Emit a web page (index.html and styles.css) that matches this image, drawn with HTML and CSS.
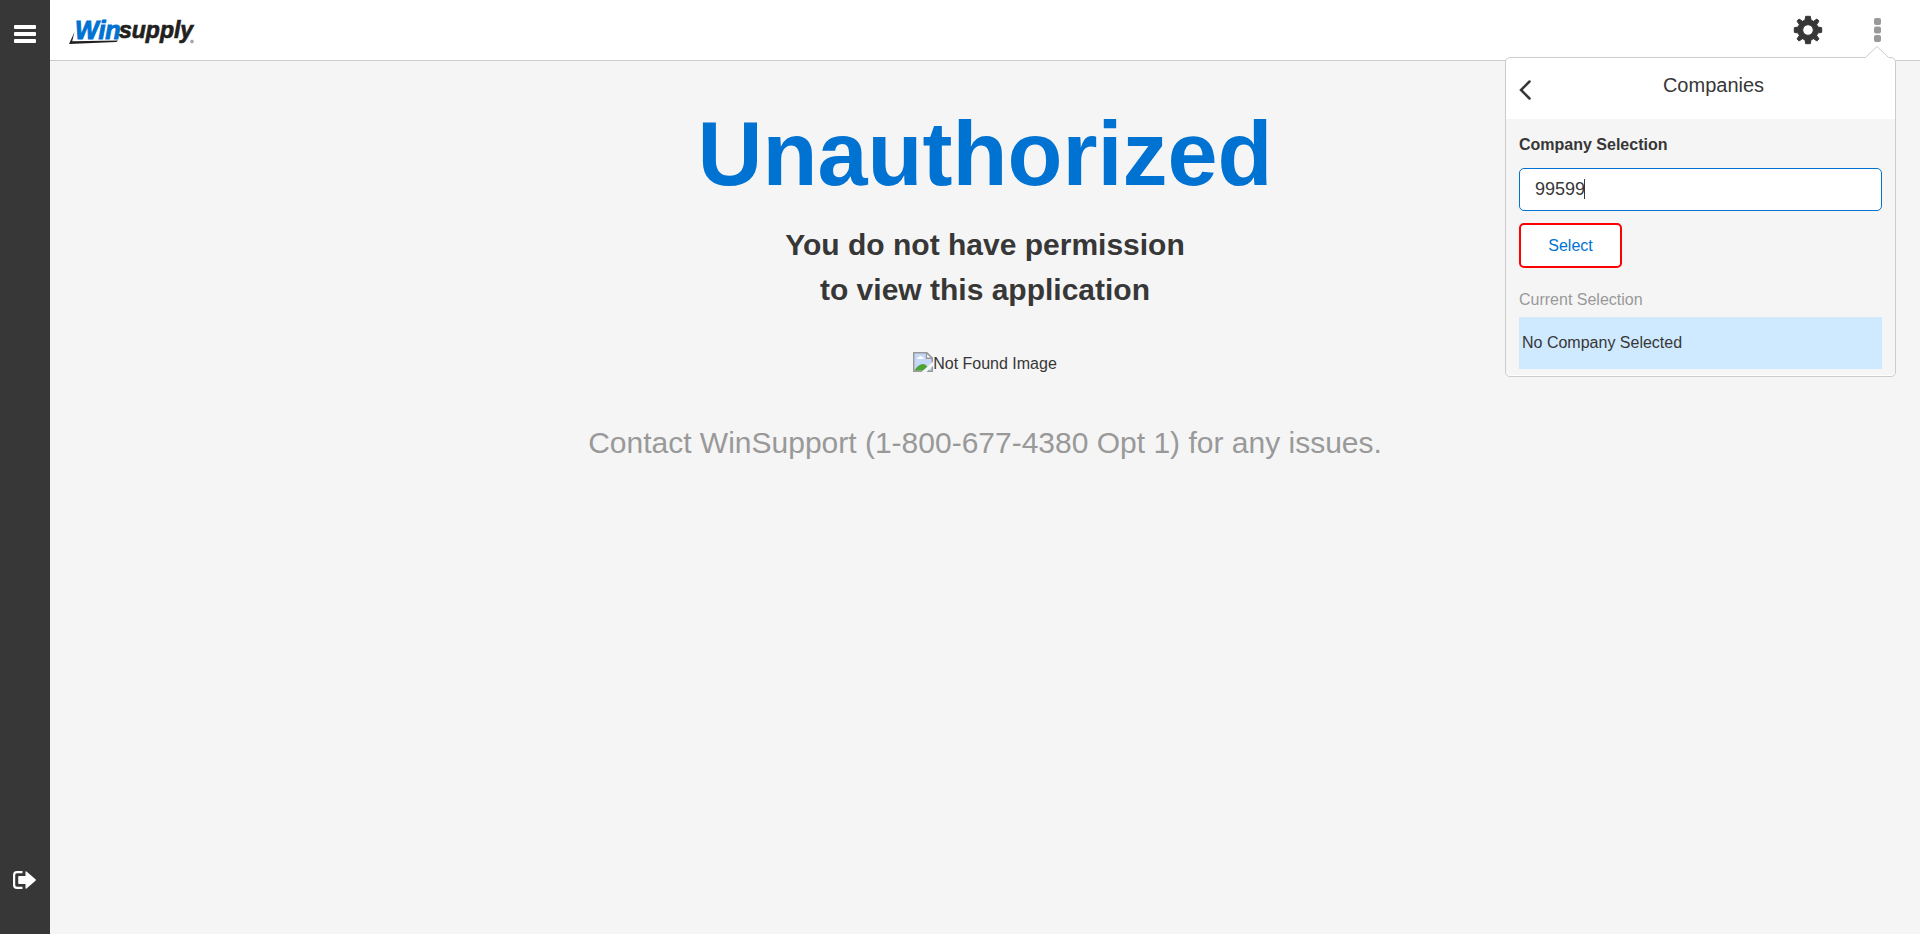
FILE: index.html
```html
<!DOCTYPE html>
<html lang="en">
<head>
<meta charset="utf-8">
<title>Unauthorized - Winsupply</title>
<link rel="stylesheet" href="styles.css">
</head>
<body>
<div class="app">
  <nav class="rail" aria-label="Main">
    <button class="icon-button" type="button" aria-label="Menu">
      <svg width="22" height="18" viewBox="0 0 22 18" fill="#fff"><rect width="22" height="4" rx="1"/><rect y="7" width="22" height="4" rx="1"/><rect y="14" width="22" height="4" rx="1"/></svg>
    </button>
    <button class="icon-button" type="button" aria-label="Sign out">
      <svg width="24" height="18" viewBox="0 0 24 18"><path d="M9.500 1.100H4Q1.100 1.100 1.100 4v10q0 2.900 2.900 2.900h5.500" fill="none" stroke="#fff" stroke-width="2.200"/><path d="M6 5h6.500V1q0-1.200 1-.5l9 7.800q.7.700 0 1.400l-9 7.800q-1 .7-1-.5v-4H6q-.8 0-.8-.8V5.800Q5.200 5 6 5z" fill="#fff"/></svg>
    </button>
  </nav>
  <div class="page">
    <header class="topbar">
      <a class="logo" href="#" aria-label="Winsupply">
        <svg width="126" height="28" viewBox="0 0 126 28">
          <path d="M5.500 14 3.200 23.300 49 22.500 47.500 24 0 26z" fill="#231f20"/>
          <text class="logo-win" x="6" y="21">Win</text>
          <text class="logo-supply" x="50" y="20">supply</text>
          <circle cx="123" cy="23.500" r="1.400" fill="#bbb" stroke="#777" stroke-width=".6"/>
        </svg>
      </a>
      <div class="tools">
        <button class="icon-button" type="button" aria-label="Settings">
          <svg width="30" height="30" viewBox="-15 -15 30 30" fill="#373737">
            <path fill-rule="evenodd" d="M-2.300-13.700h4.600l.8 4 2.500 1L8.900-11 11-8.900 8.700-5.600l1 2.500 4 .8v4.600l-4 .8-1 2.500L11 8.900 8.900 11 5.600 8.700l-2.500 1-.8 4h-4.600l-.8-4-2.500-1L-8.900 11-11 8.900-8.700 5.600l-1-2.500-4-.8v-4.600l4-.8 1-2.500L-11-8.900-8.900-11-5.600-8.700l2.500-1zM5.300 0A5.300 5.300 0 1 0-5.300 0 5.300 5.300 0 1 0 5.300 0z" stroke="#373737" stroke-linejoin="round"/>
          </svg>
        </button>
        <button class="icon-button" type="button" aria-label="More options">
          <svg width="7" height="24" viewBox="0 0 7 24" fill="#999"><rect width="7" height="7" rx="2"/><rect y="8.500" width="7" height="7" rx="2"/><rect y="17" width="7" height="7" rx="2"/></svg>
        </button>
      </div>
    </header>
    <main class="message">
      <h1 class="message-title">Unauthorized</h1>
      <h2 class="message-text">You do not have permission<br>to view this application</h2>
      <div class="missing">
        <svg width="20" height="20" viewBox="0 0 20 20">
          <path d="M.75.75h13l5.500 5.500v13H.75z" fill="#c6d8f8" stroke="#999" stroke-width="1.500"/>
          <path d="M13.500.75v5.500h5.750z" fill="#fff" stroke="#999" stroke-width="1.300"/>
          <path d="M4 7q0-2 2-2 1-2 3 0 2 0 2 2z" fill="#fff"/>
          <path d="M1.500 18.500q4-7 9-6.500 4 1 6 6.500z" fill="#4da338"/>
          <path d="M8.500 20 20 9.500V14l-6.500 6z" fill="#f5f5f5"/>
        </svg><span>Not Found Image</span>
      </div>
      <p class="message-contact">Contact WinSupport (1-800-677-4380 Opt 1) for any issues.</p>
    </main>
  </div>
  <section class="panel" aria-labelledby="panel-title">
    <svg class="panel-arrow" width="24" height="12" viewBox="0 0 24 12"><path d="M0 12 12 .5 24 12z" fill="#fff"/><path d="M.5 11.500 12 .5 23.500 11.500" fill="none" stroke="#ccc"/></svg>
    <div class="panel-head">
      <button class="back" type="button" aria-label="Back">
        <svg width="12" height="20" viewBox="0 0 12 20"><path d="M10.500 1.500 2 10l8.500 8.500" fill="none" stroke="#373737" stroke-width="2.500" stroke-linecap="round"/></svg>
      </button>
      <h3 class="panel-title" id="panel-title">Companies</h3>
    </div>
    <form class="panel-body">
      <label class="field-label" for="company">Company Selection</label>
      <div class="field-wrap">
        <input class="field" id="company" type="text" value="99599">
        <span class="caret"></span>
      </div>
      <button class="select" type="button">Select</button>
      <p class="current-label">Current Selection</p>
      <p class="current">No Company Selected</p>
    </form>
  </section>
</div>
</body>
</html>
```
FILE: styles.css
```css
* { box-sizing: border-box; }
body {
  margin: 0;
  background: #f5f5f5;
  color: #373737;
  font: 16px/24px Arial, "Liberation Sans", sans-serif;
}
h1, h2, h3, p { margin: 0; }
svg { display: block; }
button { font: inherit; cursor: pointer; }
.app { position: relative; display: flex; min-height: 100vh; }
.rail {
  width: 50px;
  padding: 25px 0 45px;
  background: #373737;
  display: flex;
  flex-direction: column;
  justify-content: space-between;
  align-items: center;
}
.icon-button, .back { padding: 0; border: 0; background: none; }
.page { flex: 1; }
.topbar {
  height: 61px;
  padding: 0 39px 0 19px;
  background: #fff;
  border-bottom: 1px solid #ccc;
  display: flex;
  justify-content: space-between;
  align-items: center;
}
.tools { display: flex; align-items: center; gap: 51px; }
.logo { padding-top: 4px; }
.logo svg { overflow: visible; }
.logo text {
  font-family: Arial, "Liberation Sans", sans-serif;
  font-weight: bold;
  font-style: italic;
}
.logo .logo-win { font-size: 25px; fill: #0072d2; stroke: #0072d2; }
.logo .logo-supply { font-size: 23px; fill: #231f20; stroke: #231f20; stroke-width: .7px; }
.message { padding: 48px 20px; text-align: center; }
.message-title { font-size: 90px; line-height: 90px; color: #0072d2; }
.message-text { margin-top: 23px; font-size: 30px; line-height: 45px; }
.missing { margin-top: 40px; display: flex; justify-content: center; }
.message-contact { margin-top: 44px; font-size: 30px; line-height: 45px; color: #999; }
.panel {
  position: absolute;
  top: 57px;
  right: 24px;
  width: 391px;
  border: 1px solid #ccc;
  border-radius: 5px;
  background: #fff;
}
.panel-arrow { position: absolute; top: -12px; right: 6px; }
.panel-head {
  padding: 14px 13px 19px;
  display: grid;
  grid-template-columns: 26px 1fr;
}
.back { padding-top: 8px; }
.panel-title { font-size: 20px; line-height: 26px; font-weight: normal; text-align: center; }
.panel-body {
  padding: 14px 13px 6px;
  margin-bottom: 1px;
  background: #f5f5f5;
  border-radius: 0 0 4px 4px;
  display: flex;
  flex-direction: column;
  align-items: flex-start;
}
.field-label { font-weight: bold; }
.field-wrap { position: relative; width: 100%; margin-top: 11px; }
.field {
  display: block;
  width: 100%;
  height: 43px;
  padding: 0 15px;
  border: 1px solid #0072d2;
  border-radius: 5px;
  outline: 0;
  background: #fff;
  color: #373737;
  font: 18px Arial, "Liberation Sans", sans-serif;
}
.caret {
  position: absolute;
  left: 65px;
  top: 11px;
  width: 1px;
  height: 20px;
  background: #373737;
}
.select {
  height: 45px;
  min-width: 103px;
  margin-top: 12px;
  padding: 0 24px;
  border: 2px solid #f00;
  border-radius: 5px;
  background: #fff;
  color: #0072d2;
}
.current-label { margin-top: 20px; color: #999; }
.current { width: 100%; margin-top: 5px; padding: 14px 3px; background: #cfe9ff; }
```
